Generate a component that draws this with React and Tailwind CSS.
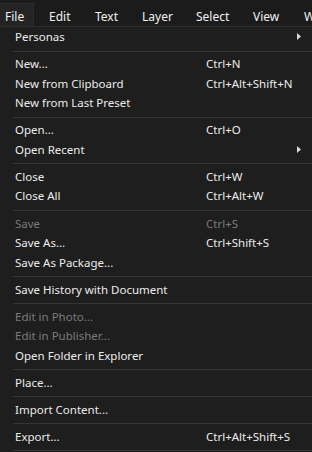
const menus = [
  { name: "Edit", w: "w-[46px]" },
  { name: "Text", w: "w-[47px]" },
  { name: "Layer", w: "w-[54px]" },
  { name: "Select", w: "w-[57px]" },
  { name: "View", w: "w-[51px]" },
  { name: "W", w: "w-[20px]" },
];

const groups = [
  [{ label: "Personas", sub: true }],
  [
    { label: "New...", key: "Ctrl+N" },
    { label: "New from Clipboard", key: "Ctrl+Alt+Shift+N" },
    { label: "New from Last Preset" },
  ],
  [
    { label: "Open...", key: "Ctrl+O" },
    { label: "Open Recent", sub: true },
  ],
  [
    { label: "Close", key: "Ctrl+W" },
    { label: "Close All", key: "Ctrl+Alt+W" },
  ],
  [
    { label: "Save", key: "Ctrl+S", disabled: true },
    { label: "Save As...", key: "Ctrl+Shift+S" },
    { label: "Save As Package..." },
  ],
  [{ label: "Save History with Document" }],
  [
    { label: "Edit in Photo...", disabled: true },
    { label: "Edit in Publisher...", disabled: true },
    { label: "Open Folder in Explorer" },
  ],
  [{ label: "Place..." }],
  [{ label: "Import Content..." }],
  [{ label: "Export...", key: "Ctrl+Alt+Shift+S" }],
];

function Row({ label, shortcut, sub, disabled }) {
  return (
    <div
      className={`relative flex items-center h-[19.5px] pl-[15px] ${
        disabled ? "text-[#7b7b7b]" : "text-[#ececec]"
      }`}
    >
      <span className="w-[191px] whitespace-nowrap">{label}</span>
      {shortcut && <span className="whitespace-nowrap">{shortcut}</span>}
      {sub && (
        <svg
          className="absolute left-[297px] top-[6px]"
          width="4"
          height="7"
          viewBox="0 0 4 7"
        >
          <path d="M0 0 L4 3.5 L0 7 Z" fill="#d8d8d8" />
        </svg>
      )}
    </div>
  );
}

export default function App() {
  return (
    <div
      className="w-[312px] h-[452px] overflow-hidden bg-[#1e1e1e] text-[11.5px]"
      style={{ fontFamily: '"Noto Sans", "Open Sans", sans-serif' }}
    >
      {/* menubar */}
      <div className="flex items-end h-[27px] bg-[#1b1b1b] border-b border-[#2e2e2e] text-[#f0f0f0] text-[12px] whitespace-nowrap">
        <div className="h-[23px] w-[34px] shrink-0 pl-[5px] pt-[4px] flex items-center bg-[#242424] border-t border-r border-[#2c2c2c]">
          File
        </div>
        <div className="flex ml-[15px]">
          {menus.map((m) => (
            <div key={m.name} className={`h-[23px] pt-[4px] flex items-center shrink-0 ${m.w}`}>
              {m.name}
            </div>
          ))}
        </div>
      </div>

      {/* dropdown */}
      <div className="flex flex-col">
        {groups.map((g, gi) => (
          <div key={gi}>
            {g.map((it) => (
              <Row
                key={it.label}
                label={it.label}
                shortcut={it.key}
                sub={it.sub}
                disabled={it.disabled}
              />
            ))}
            <div className="mt-[4.1px] mb-[2.5px] ml-[13px] h-px bg-[#353535]" />
          </div>
        ))}
      </div>
    </div>
  );
}
